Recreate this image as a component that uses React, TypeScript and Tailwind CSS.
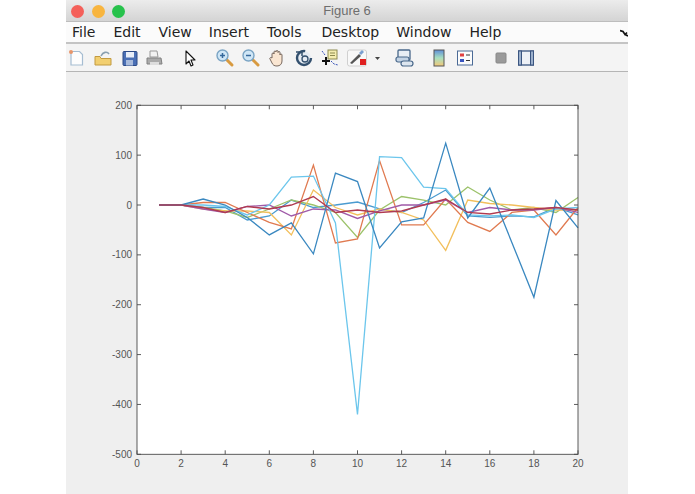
const F = '"Liberation Sans", Arial, sans-serif';

const SERIES: { c: string; v: number[] }[] = [
  { c: '#4a9bd0', v: [0, 0, -5, -5, -30, -22, 10, -5, 0, 6, -8, -15, 5, 30, -22, -25, -22, -24, -5, -20] },
  { c: '#9cc26a', v: [0, 0, -5, -12, -25, -8, 10, 0, -15, -65, -10, 17, 10, 0, 36, 10, -10, -5, -15, 15] },
  { c: '#f2bf5c', v: [0, 0, -8, -12, -12, -15, -60, 30, -5, -20, -8, -15, -30, -91, 10, 3, 0, -5, -10, -10] },
  { c: '#e07a50', v: [0, 0, 5, 5, -15, -35, -48, 80, -76, -68, 89, -40, -40, 12, -35, -53, -15, -10, -60, -5] },
  { c: '#a05aa8', v: [0, 0, -8, -15, -3, 0, -22, -8, -10, -27, -12, 0, 0, 10, -15, -5, -10, -10, -5, -15] },
  { c: '#6cc6ec', v: [0, 0, 0, -3, -20, 0, 56, 58, -36, -420, 97, 95, 36, 33, -20, -22, -20, -25, -8, -5] },
  { c: '#3a88c0', v: [0, 0, 12, 0, -25, -60, -36, -98, 64, 47, -86, -34, -26, 124, -26, 34, -75, -185, 9, -46] },
  { c: '#b03a50', v: [0, 0, -5, -15, -3, -8, 0, 17, -15, -10, -15, -12, 0, 12, -15, -18, -10, -8, -5, -10] },
];

const X0 = 71;
const PX = 22.05;
const Y0 = 133;
const PY = 0.4986;
const sx = (x: number) => X0 + x * PX;
const sy = (y: number) => Y0 - y * PY;

const XT = [0, 2, 4, 6, 8, 10, 12, 14, 16, 18, 20];
const YT = [200, 100, 0, -100, -200, -300, -400, -500];

function Chart() {
  const top = sy(200);
  const bot = sy(-500);
  const left = sx(0);
  const right = sx(20);
  return (
    <svg width="562" height="422" viewBox="0 0 562 422" className="block">
      <rect x={left} y={top} width={right - left} height={bot - top} fill="#ffffff" />
      {SERIES.map((s) => (
        <polyline
          key={s.c}
          fill="none"
          stroke={s.c}
          strokeWidth="1.3"
          strokeLinejoin="miter"
          points={s.v.map((v, i) => `${sx(i + 1)},${sy(v)}`).join(' ')}
        />
      ))}
      <rect x={left} y={top} width={right - left} height={bot - top} fill="none" stroke="#4a4a4a" strokeWidth="0.9" />
      {XT.map((t) => (
        <g key={t}>
          <line x1={sx(t)} x2={sx(t)} y1={bot} y2={bot - 4} stroke="#4a4a4a" strokeWidth="0.9" />
          <line x1={sx(t)} x2={sx(t)} y1={top} y2={top + 4} stroke="#4a4a4a" strokeWidth="0.9" />
          <text x={sx(t)} y={bot + 12.5} textAnchor="middle" fontSize="10" fill="#555555" fontFamily={F}>
            {t}
          </text>
        </g>
      ))}
      {YT.map((t) => (
        <g key={t}>
          <line x1={left} x2={left + 4} y1={sy(t)} y2={sy(t)} stroke="#4a4a4a" strokeWidth="0.9" />
          <line x1={right} x2={right - 4} y1={sy(t)} y2={sy(t)} stroke="#4a4a4a" strokeWidth="0.9" />
          <text x={left - 5} y={sy(t) + 3.5} textAnchor="end" fontSize="10" fill="#555555" fontFamily={F}>
            {t}
          </text>
        </g>
      ))}
    </svg>
  );
}

const Ico = ({ w = 20, children }: { w?: number; children: React.ReactNode }) => (
  <svg width={w} height="20" viewBox={`0 0 ${w} 20`} className="block shrink-0">
    {children}
  </svg>
);

const Lens = ({ sign }: { sign: '+' | '-' }) => (
  <Ico>
    <line x1="11" y1="11" x2="17" y2="17" stroke="#d89a40" strokeWidth="3" strokeLinecap="round" />
    <circle cx="7.500" cy="7.500" r="5.500" fill="#cfe6f6" stroke="#7aa4c4" strokeWidth="1.4" />
    <path d={sign === '+' ? 'M5 7.500h5M7.500 5v5' : 'M5 7.500h5'} stroke="#35699c" strokeWidth="1.5" />
  </Ico>
);

const MENU: [string, string][] = [
  ['File', 'mr-[18px]'],
  ['Edit', 'mr-[18px]'],
  ['View', 'mr-[17px]'],
  ['Insert', 'mr-[18px]'],
  ['Tools', 'mr-[20px]'],
  ['Desktop', 'mr-[17px]'],
  ['Window', 'mr-[18px]'],
  ['Help', ''],
];

export default function App() {
  return (
    <div className="w-[695px] h-[494px] bg-white pl-[66px] overflow-hidden">
      <div className="w-[562px] h-full flex flex-col bg-[#efefef]">
        <div className="relative h-[22px] shrink-0 flex items-center justify-center bg-gradient-to-b from-[#ececec] to-[#d4d4d4] border-b border-[#bdbdbd]">
          <div className="absolute left-[5px] top-[5px] flex gap-[7.5px]">
            <div className="w-[13px] h-[13px] rounded-full bg-[#f4605a]" />
            <div className="w-[13px] h-[13px] rounded-full bg-[#f8b53f]" />
            <div className="w-[13px] h-[13px] rounded-full bg-[#27c24c]" />
          </div>
          <span className="text-[13px] text-[#6e6e6e]" style={{ fontFamily: F }}>Figure 6</span>
        </div>
        <div className="relative h-[22px] shrink-0 flex items-center pl-[6px] pt-[1px] bg-[#fbfbfb] border-b-2 border-[#c4c4c4] text-[14px] text-[#222]" style={{ fontFamily: '"DejaVu Sans", sans-serif' }}>
          {MENU.map(([m, c]) => (
            <span key={m} className={c}>{m}</span>
          ))}
          <svg width="8" height="8" viewBox="0 0 8 8" className="absolute right-0 top-[7px]">
            <path d="M0 1.500 L3 2.500 L5 5.500 L7 3.500 M5 5.500 L8 7" fill="none" stroke="#111" strokeWidth="1.7" />
          </svg>
        </div>
        <div className="h-[28px] shrink-0 flex items-center pl-[1px] pt-[1px] bg-[#f4f4f4] border-b border-[#b5b5b5]">
          <Ico w={18}>
            <path d="M4 3.500h8.500l3 3V17H4z" fill="#fdfdfd" stroke="#a6bdd2" strokeWidth="1.2" />
            <circle cx="4" cy="4" r="2" fill="#e8956a" />
          </Ico>
          <div className="w-[8px]" />
          <Ico>
            <path d="M2 8.500h5l1 2h10v6.500H2z" fill="#f2cf70" stroke="#c29a40" />
            <path d="M8 8c2-4 6-5 8-2" fill="none" stroke="#8aa0b0" strokeWidth="1.6" />
          </Ico>
          <div className="w-[7px]" />
          <Ico>
            <rect x="3" y="3.500" width="14" height="14" rx="1" fill="#4a6fb5" stroke="#2c4a86" />
            <rect x="6" y="4" width="8" height="5.500" fill="#e8eef8" />
            <rect x="6" y="12" width="7" height="5.500" fill="#a9bbdb" />
          </Ico>
          <div className="w-[4px]" />
          <Ico>
            <path d="M6 3h7l1 6H6z" fill="#f2f2f2" stroke="#999" />
            <path d="M3 10h14l1 6H3z" fill="#aaa" stroke="#808080" />
            <rect x="6" y="14" width="9" height="3" fill="#ddd" />
          </Ico>
          <div className="w-[16px]" />
          <Ico>
            <path d="M6 3v13l3-3 2 5 2-1-2-5h4z" fill="#fff" stroke="#111" strokeWidth="1.1" strokeLinejoin="round" />
          </Ico>
          <div className="w-[15px]" />
          <Lens sign="+" />
          <div className="w-[6px]" />
          <Lens sign="-" />
          <div className="w-[6px]" />
          <Ico>
            <path d="M5 10V6a1 1 0 0 1 2 0V4a1 1 0 0 1 2 0V3.500a1 1 0 0 1 2 0V4.500a1 1 0 0 1 2 0V7a1 1 0 0 1 2 0v6c0 3-2 5-5 5s-4-1-5-3L3 11c-1-1 1-2 2-1z" fill="#fae6d2" stroke="#6a5a50" strokeWidth="0.9" />
          </Ico>
          <div className="w-[7px]" />
          <Ico>
            <circle cx="10" cy="10" r="7" fill="#e6ecf3" stroke="#33506e" strokeWidth="2.400" strokeDasharray="34 10" />
            <path d="M2 4h6v4" fill="none" stroke="#33506e" strokeWidth="1.500" />
            <circle cx="11" cy="11" r="3" fill="none" stroke="#33506e" strokeWidth="1.300" />
          </Ico>
          <div className="w-[6px]" />
          <Ico>
            <rect x="8" y="2" width="9" height="9" fill="#f5eeb0" stroke="#8c8a50" />
            <path d="M10 5h5M10 7.500h5" stroke="#8c8a50" />
            <path d="M6 9v8M2 13h8" stroke="#111" strokeWidth="2" />
            <path d="M11 13l3 3 4 1" fill="none" stroke="#3b55b8" strokeDasharray="2 1" />
            <path d="M2 3l3 4" fill="none" stroke="#3b55b8" strokeDasharray="2 1" />
          </Ico>
          <div className="w-[7px]" />
          <Ico>
            <rect x="0.500" y="2" width="19" height="16" rx="2" fill="#f8f8f8" stroke="#d0d0d0" />
            <path d="M3 15l9-9 2 2-9 8z" fill="#555" />
            <path d="M12 5l3-3 2 2-3 3z" fill="#7a9fd0" />
            <rect x="13" y="11" width="6" height="6" fill="#e02020" />
          </Ico>
          <svg width="5" height="3" viewBox="0 0 5 3" className="ml-[8px] shrink-0">
            <path d="M0 0h5L2.500 3z" fill="#444" />
          </svg>
          <div className="w-[14px]" />
          <Ico>
            <rect x="4" y="2" width="12" height="10" rx="1" fill="#e8eef4" stroke="#49688a" strokeWidth="1.3" />
            <rect x="2" y="9" width="13" height="5" rx="2" fill="#c3d3e4" stroke="#49688a" strokeWidth="1.2" />
            <rect x="7" y="13" width="12" height="5" rx="2.500" fill="#dde6ef" stroke="#49688a" strokeWidth="1.2" />
          </Ico>
          <div className="w-[19px]" />
          <svg width="12" height="20" viewBox="0 0 12 20" className="block shrink-0">
            <defs>
              <linearGradient id="cb" x1="0" y1="0" x2="0" y2="1">
                <stop offset="0" stopColor="#5f8fd8" />
                <stop offset="0.5" stopColor="#a8e0c0" />
                <stop offset="1" stopColor="#f2c878" />
              </linearGradient>
            </defs>
            <rect x="1" y="2" width="10" height="16" fill="url(#cb)" stroke="#555" />
          </svg>
          <div className="w-[12px]" />
          <Ico w={16}>
            <rect x="0.500" y="3" width="15" height="14" fill="#fbfbfb" stroke="#4a6a96" />
            <rect x="3" y="5.500" width="4" height="3" fill="#e04040" />
            <rect x="3" y="11" width="4" height="3" fill="#3a55c0" />
            <path d="M9 7h4M9 12.500h4" stroke="#333" />
          </Ico>
          <div className="w-[22px]" />
          <Ico w={12}>
            <rect x="1" y="5" width="10" height="10" rx="1" fill="#9a9a9a" stroke="#888" />
          </Ico>
          <div className="w-[11px]" />
          <Ico w={16}>
            <rect x="0.500" y="3" width="15" height="14" fill="#eef1f6" stroke="#3a5580" strokeWidth="1.300" />
            <rect x="0.500" y="3" width="3" height="14" fill="#9cb0cc" stroke="#3a5580" />
            <rect x="12.500" y="3" width="3" height="14" fill="#9cb0cc" stroke="#3a5580" />
          </Ico>
        </div>
        <div className="flex-1 min-h-0">
          <Chart />
        </div>
      </div>
    </div>
  );
}
